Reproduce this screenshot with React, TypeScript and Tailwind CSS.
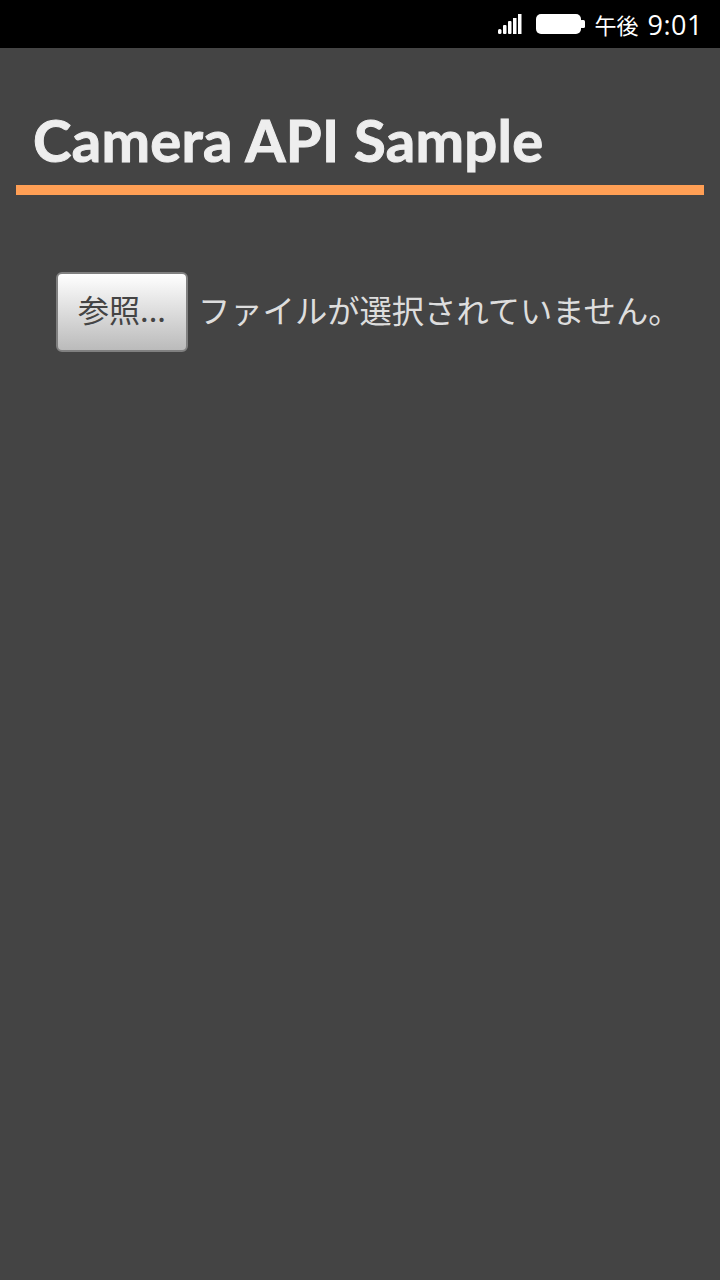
import React from 'react';

const jp = { fontFamily: '"Noto Sans CJK JP", sans-serif' };

const StatusBar = () => (
  <div className="flex h-12 items-center justify-end bg-black pr-[17px] text-white" style={jp}>
    <svg width="24" height="20" viewBox="0 0 24 20" className="mr-[14px]" fill="#fff">
      <rect x="0" y="15" width="3.5" height="5" rx="1.5" />
      <rect x="5" y="11" width="3.5" height="9" rx="1" />
      <rect x="10" y="7" width="3.5" height="13" rx="1" />
      <rect x="15" y="4" width="3.5" height="16" />
      <rect x="20" y="0" width="3.5" height="20" />
    </svg>
    <svg width="49" height="20" viewBox="0 0 49 20" className="mr-[10px]" fill="#fff">
      <rect x="0" y="0" width="45" height="20" rx="5" />
      <rect x="44" y="6" width="5" height="8" rx="1.5" />
    </svg>
    <span className="mr-[9px] text-[22px] leading-none">午後</span>
    <span className="text-[27px] leading-none tracking-[0.5px]" style={{ fontFamily: '"Open Sans", sans-serif' }}>
      9:01
    </span>
  </div>
);

const App = () => {
  return (
    <div className="min-h-[1280px] w-full bg-[#444444]">
      <StatusBar />

      {/* Title */}
      <div className="mx-4 mt-[49px] border-b-[10px] border-[#ff9f55] pl-[17px]">
        <h1
          className="h-[88px] text-[58px] font-bold leading-[86px] tracking-[0.3px] text-[#eeeeee] [-webkit-text-stroke:1px_#eeeeee]"
          style={{ fontFamily: 'Lato, sans-serif' }}
        >
          Camera API Sample
        </h1>
      </div>

      {/* File input */}
      <div className="ml-14 mt-[77px] flex items-center">
        <button
          className="flex h-20 w-[132px] items-center justify-center rounded-md border-2 border-[#808080] bg-gradient-to-b from-white to-[#bbbbbb] pb-[6px] text-[31px] text-[#444444]"
          style={jp}
        >
          参照...
        </button>
        <span className="ml-[10px] whitespace-nowrap pb-[5px] text-[32.3px] leading-none text-[#dddddd]" style={jp}>
          ファイルが選択されていません。
        </span>
      </div>
    </div>
  );
};

export default App;
